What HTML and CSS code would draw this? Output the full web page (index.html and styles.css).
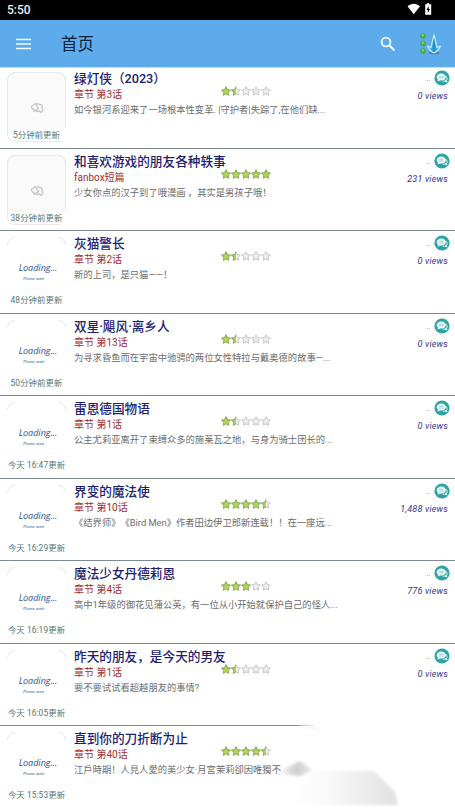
FILE: index.html
```html
<!DOCTYPE html>
<html lang="zh-CN">
<head>
<meta charset="utf-8">
<title>首页</title>
<link rel="stylesheet" href="styles.css">
</head>
<body>
<svg class="defs" aria-hidden="true">
  <defs>
    <linearGradient id="green" x2="0" y2="1"><stop offset="0" stop-color="#a9cc62"/><stop offset="1" stop-color="#bfe249"/></linearGradient>
    <linearGradient id="arrow"><stop offset="0" stop-color="#8fd8fa"/><stop offset=".5" stop-color="#168bd0"/><stop offset="1" stop-color="#8fd8fa"/></linearGradient>
    <path id="star-shape" d="M5 .8 6.3 3.6 9.4 4 7.1 6.1 7.7 9.2 5 7.7 2.3 9.2 2.9 6.1.6 4 3.7 3.6Z" stroke-linejoin="round"/>
    <clipPath id="half"><rect width="5" height="10"/></clipPath>
    <symbol id="empty" viewBox="0 0 10 10"><use href="#star-shape" fill="#efefef" stroke="#c6c6c6" stroke-width="1"/></symbol>
    <symbol id="full" viewBox="0 0 10 10"><use href="#star-shape" fill="url(#green)" stroke="#93b163" stroke-width="1.100"/></symbol>
    <symbol id="part" viewBox="0 0 10 10"><use href="#star-shape" fill="#efefef" stroke="#c6c6c6" stroke-width="1"/><g clip-path="url(#half)"><use href="#star-shape" fill="url(#green)" stroke="#93b163" stroke-width="1.100"/></g></symbol>
    <symbol id="s15" viewBox="0 0 50 10"><use href="#full" width="10" height="10"/><use href="#part" x="10" width="10" height="10"/><use href="#empty" x="20" width="10" height="10"/><use href="#empty" x="30" width="10" height="10"/><use href="#empty" x="40" width="10" height="10"/></symbol>
    <symbol id="s30" viewBox="0 0 50 10"><use href="#full" width="10" height="10"/><use href="#full" x="10" width="10" height="10"/><use href="#full" x="20" width="10" height="10"/><use href="#empty" x="30" width="10" height="10"/><use href="#empty" x="40" width="10" height="10"/></symbol>
    <symbol id="s45" viewBox="0 0 50 10"><use href="#full" width="10" height="10"/><use href="#full" x="10" width="10" height="10"/><use href="#full" x="20" width="10" height="10"/><use href="#full" x="30" width="10" height="10"/><use href="#part" x="40" width="10" height="10"/></symbol>
    <symbol id="s50" viewBox="0 0 50 10"><use href="#full" width="10" height="10"/><use href="#full" x="10" width="10" height="10"/><use href="#full" x="20" width="10" height="10"/><use href="#full" x="30" width="10" height="10"/><use href="#full" x="40" width="10" height="10"/></symbol>
    <symbol id="chat" viewBox="0 0 16 16"><circle cx="8" cy="8" r="7.6" fill="#2da3a6"/><path d="M8.800 11.200c2.700.3 4.300-.9 4.400-2.600 0-1-.5-1.700-1.300-2.200M11 11l2 1-.7-1.800" fill="none" stroke="#e4f8f8" stroke-width="1"/><ellipse cx="7.300" cy="7.100" rx="4.700" ry="3.500" fill="#effcfc"/><path d="M4 9l-.5 2.400 3-1.100Z" fill="#effcfc"/><path d="M4.900 6.300h4.800M4.900 8h4.800" stroke="#72c2c4" stroke-width=".7"/></symbol>
    <symbol id="cards" viewBox="0 0 14 12"><g fill="none" stroke="#cbcbcb" stroke-width="1.500" stroke-linejoin="round"><path d="M6.500 1.500 11.800 3 12.800 8 11 10.500 9 8.800 6 9.800"/><path d="M1.300 4.500 5.500 1.500 8.300 6.500 6.300 8 4.200 9.300 4 7.500 2.300 7Z"/></g></symbol>
  </defs>
</svg>
<div class="screen">
  <div class="status">
    <span class="clock">5:50</span>
    <svg class="signal" viewBox="0 0 26 14"><path d="M.5 4.300C4.200.8 9.300.8 13 4.300L6.700 12.200Z" fill="#fff"/><path d="M19.800 2.200V1.200h2.500v1h1.900v10.500h-6V2.200Z" fill="#fff"/><path d="M21.700 4 19.500 8h1.300v3l2.200-4h-1.300Z" fill="#000"/></svg>
  </div>
  <header class="bar">
    <svg class="menu" viewBox="0 0 15 12"><path d="M0 1.500h15M0 6h15M0 10.500h15" stroke="#effcff" stroke-width="1.700"/></svg>
    <h1 class="page">首页</h1>
    <svg class="search" viewBox="0 0 16 16"><circle cx="6" cy="6" r="4.400" fill="none" stroke="#f4fbff" stroke-width="1.800"/><path d="M9.300 9.300 14.500 14.500" stroke="#f4fbff" stroke-width="2.100"/></svg>
    <svg class="sort" viewBox="0 0 24 24"><g fill="#46b637" stroke="#399e4b" stroke-width=".6"><circle cx="4" cy="4" r="2.500"/><circle cx="4" cy="11.500" r="2.500"/><circle cx="4" cy="19" r="2.500"/></g><g fill="#9ae66b"><circle cx="3.800" cy="3.300" r="1"/><circle cx="3.800" cy="10.800" r="1"/><circle cx="3.800" cy="18.300" r="1"/></g><ellipse cx="15" cy="20.800" rx="5.500" ry="1.600" fill="#4783b4"/><path d="M15 2.500 18 15.500 21.500 14Q20 18.500 15 21 10 18.500 8.500 14L12 15.500Z" fill="url(#arrow)" stroke="#c4eafd" stroke-width="1.200" stroke-linejoin="round"/></svg>
  </header>
  <main class="list">
    <article class="row">
      <div class="thumb blank"><svg class="picture"><use href="#cards"/></svg><span class="time">5分钟前更新</span></div>
      <div class="info"><h2 class="title">绿灯侠（2023）</h2><p class="chapter">章节 第3话</p><p class="desc">如今银河系迎来了一场根本性变革. |守护者|失踪了,在他们缺...</p></div>
      <svg class="stars"><use href="#s15"/></svg>
      <div class="meta"><div class="talk"><span>..</span><svg class="bubble"><use href="#chat"/></svg></div><span class="views">0 views</span></div>
    </article>
    <article class="row">
      <div class="thumb blank"><svg class="picture"><use href="#cards"/></svg><span class="time">38分钟前更新</span></div>
      <div class="info"><h2 class="title">和喜欢游戏的朋友各种轶事</h2><p class="chapter">fanbox短篇</p><p class="desc">少女你点的汉子到了哦漫画 ，其实是男孩子哦！</p></div>
      <svg class="stars"><use href="#s50"/></svg>
      <div class="meta"><div class="talk"><span>..</span><svg class="bubble"><use href="#chat"/></svg></div><span class="views">231 views</span></div>
    </article>
    <article class="row">
      <div class="thumb"><span class="loading">Loading...</span><span class="wait">Please wait</span><span class="time">48分钟前更新</span></div>
      <div class="info"><h2 class="title">灰猫警长</h2><p class="chapter">章节 第2话</p><p class="desc">新的上司，是只猫——！</p></div>
      <svg class="stars"><use href="#s15"/></svg>
      <div class="meta"><div class="talk"><span>..</span><svg class="bubble"><use href="#chat"/></svg></div><span class="views">0 views</span></div>
    </article>
    <article class="row">
      <div class="thumb"><span class="loading">Loading...</span><span class="wait">Please wait</span><span class="time">50分钟前更新</span></div>
      <div class="info"><h2 class="title">双星·飓风·离乡人</h2><p class="chapter">章节 第13话</p><p class="desc">为寻求昏鱼而在宇宙中驰骋的两位女性特拉与戴奥德的故事—...</p></div>
      <svg class="stars"><use href="#s15"/></svg>
      <div class="meta"><div class="talk"><span>..</span><svg class="bubble"><use href="#chat"/></svg></div><span class="views">0 views</span></div>
    </article>
    <article class="row">
      <div class="thumb"><span class="loading">Loading...</span><span class="wait">Please wait</span><span class="time">今天 16:47更新</span></div>
      <div class="info"><h2 class="title">雷恩德国物语</h2><p class="chapter">章节 第1话</p><p class="desc">公主尤莉亚离开了束缚众多的施莱瓦之地，与身为骑士团长的...</p></div>
      <svg class="stars"><use href="#s15"/></svg>
      <div class="meta"><div class="talk"><span>..</span><svg class="bubble"><use href="#chat"/></svg></div><span class="views">0 views</span></div>
    </article>
    <article class="row">
      <div class="thumb"><span class="loading">Loading...</span><span class="wait">Please wait</span><span class="time">今天 16:29更新</span></div>
      <div class="info"><h2 class="title">界变的魔法使</h2><p class="chapter">章节 第10话</p><p class="desc">《结界师》《Bird Men》作者田边伊卫郎新连载！！在一座远...</p></div>
      <svg class="stars"><use href="#s45"/></svg>
      <div class="meta"><div class="talk"><span>..</span><svg class="bubble"><use href="#chat"/></svg></div><span class="views">1,488 views</span></div>
    </article>
    <article class="row">
      <div class="thumb"><span class="loading">Loading...</span><span class="wait">Please wait</span><span class="time">今天 16:19更新</span></div>
      <div class="info"><h2 class="title">魔法少女丹德莉恩</h2><p class="chapter">章节 第4话</p><p class="desc">高中1年级的御花见蒲公英，有一位从小开始就保护自己的怪人...</p></div>
      <svg class="stars"><use href="#s30"/></svg>
      <div class="meta"><div class="talk"><span>..</span><svg class="bubble"><use href="#chat"/></svg></div><span class="views">776 views</span></div>
    </article>
    <article class="row">
      <div class="thumb"><span class="loading">Loading...</span><span class="wait">Please wait</span><span class="time">今天 16:05更新</span></div>
      <div class="info"><h2 class="title">昨天的朋友，是今天的男友</h2><p class="chapter">章节 第1话</p><p class="desc">要不要试试看超越朋友的事情?</p></div>
      <svg class="stars"><use href="#s15"/></svg>
      <div class="meta"><div class="talk"><span>..</span><svg class="bubble"><use href="#chat"/></svg></div><span class="views">0 views</span></div>
    </article>
    <article class="row">
      <div class="thumb"><span class="loading">Loading...</span><span class="wait">Please wait</span><span class="time">今天 15:53更新</span></div>
      <div class="info"><h2 class="title">直到你的刀折断为止</h2><p class="chapter">章节 第40话</p><p class="desc">江戶時期！人見人愛的美少女·月宮茉莉卻因唯獨不</p></div>
      <svg class="stars"><use href="#s45"/></svg>
    </article>
  </main>
  <svg class="fade" viewBox="0 0 175 90">
    <defs>
      <linearGradient id="veil"><stop offset="0" stop-color="#fff" stop-opacity="0"/><stop offset=".12" stop-color="#fff"/></linearGradient>
      <linearGradient id="wedge"><stop offset="0" stop-color="#bbb" stop-opacity="0"/><stop offset=".5" stop-color="#cfcfcf"/><stop offset="1" stop-color="#ececec"/></linearGradient>
      <linearGradient id="slab"><stop offset="0" stop-color="#fff"/><stop offset=".35" stop-color="#f9f9f9"/><stop offset="1" stop-color="#e0e0e0"/></linearGradient>
      <filter id="soft"><feGaussianBlur stdDeviation="1.400"/></filter>
    </defs>
    <rect x="16" width="159" height="16" fill="url(#veil)"/>
    <path d="M18 8 28 4 41 13 24 9Z" fill="#e6eae9" opacity=".5" filter="url(#soft)"/>
    <path d="M0 53 20 43 33 52 20 58 0 56Z" fill="url(#wedge)" filter="url(#soft)"/>
    <path d="M32 53H94L115 74 118 87H10Z" fill="url(#slab)" filter="url(#soft)"/>
  </svg>
</div>
</body>
</html>
```
FILE: styles.css
```css
* { box-sizing: border-box; }
body { margin: 0; background: #fff; font-family: Roboto, "Noto Sans CJK SC", sans-serif; text-spacing-trim: space-all; }
.defs { position: absolute; width: 0; height: 0; }
.screen { position: relative; width: 455px; height: 808px; overflow: hidden; background: #fff; }
.status { display: flex; justify-content: space-between; align-items: flex-start; height: 20px; padding: 2px 20px 0 7px; background: #000; }
.clock { color: #eee; font-size: 12px; line-height: 17px; font-weight: 500; }
.signal { width: 26px; height: 14px; margin-right: 2px; }
.bar { display: flex; align-items: center; height: 48px; padding: 1px 11px 0 16px; background: #5dabeb; border-bottom: 1px solid #c4dff5; }
.menu { width: 15px; height: 12px; }
.page { margin: 2px auto 0 30px; color: #0c2437; font-size: 16.500px; line-height: 24px; font-weight: 400; }
.search { width: 16px; height: 16px; margin-right: 23px; }
.sort { width: 24px; height: 24px; margin-right: 1px; }
.list { margin-top: -2px; }
.row { display: flex; align-items: flex-start; position: relative; height: 82.500px; padding: 6px 5px 0 7px; border-bottom: 1px solid #7b8a93; white-space: nowrap; }
.row:last-child { border-bottom: 0; }
.thumb { display: flex; flex-direction: column; align-items: center; width: 59px; height: 70px; border: 1px solid transparent; border-radius: 8px; flex: none; position: relative; }
.thumb::before { content: ""; position: absolute; inset: -1px; border: 1px solid #e2e6e6; border-radius: 8px; clip-path: polygon(0 0, 8px 0, 8px 8px, 51px 8px, 51px 0, 100% 0, 100% 8px, 0 8px); }
.blank { background: #fafafa; border-color: #e8e8e8; }
.picture { width: 14px; height: 12px; margin-top: 29px; }
.loading { margin-top: 23px; padding-left: 3px; font: italic 9px/13px "Open Sans", sans-serif; color: #2b5190; }
.wait { font: italic 4.300px/6px "Open Sans", sans-serif; color: #2b5190; margin: 1px 6px 0 0; }
.time { margin-top: auto; width: 58px; height: 13px; display: flex; justify-content: center; background: #fff; color: #557574; font-size: 8.400px; line-height: 14px; white-space: pre; border-radius: 0 0 7px 7px; letter-spacing: .08px; }
.info { margin-left: 8px; }
.title { margin: -2px 0 0; color: #20206f; font-size: 12.650px; line-height: 17px; font-weight: 500; }
.chapter { margin: 0; color: #a32b30; font-size: 10px; line-height: 15px; }
.desc { margin: 1px 0 0; color: #6c6c6c; font-size: 9.300px; line-height: 14px; }
.stars { position: absolute; left: 221px; top: 20px; width: 50px; height: 10px; }
.meta { display: flex; flex-direction: column; align-items: flex-end; margin: -2px 0 0 auto; }
.talk { display: flex; align-items: center; gap: 3px; color: #888; font-size: 9px; line-height: 16px; }
.bubble { width: 16px; height: 16px; }
.views { margin: 4px 2px 0 0; color: #34348f; font-size: 9px; line-height: 13px; font-style: italic; letter-spacing: .2px; }
.fade { position: absolute; left: 280px; top: 718px; width: 175px; height: 90px; }
```
